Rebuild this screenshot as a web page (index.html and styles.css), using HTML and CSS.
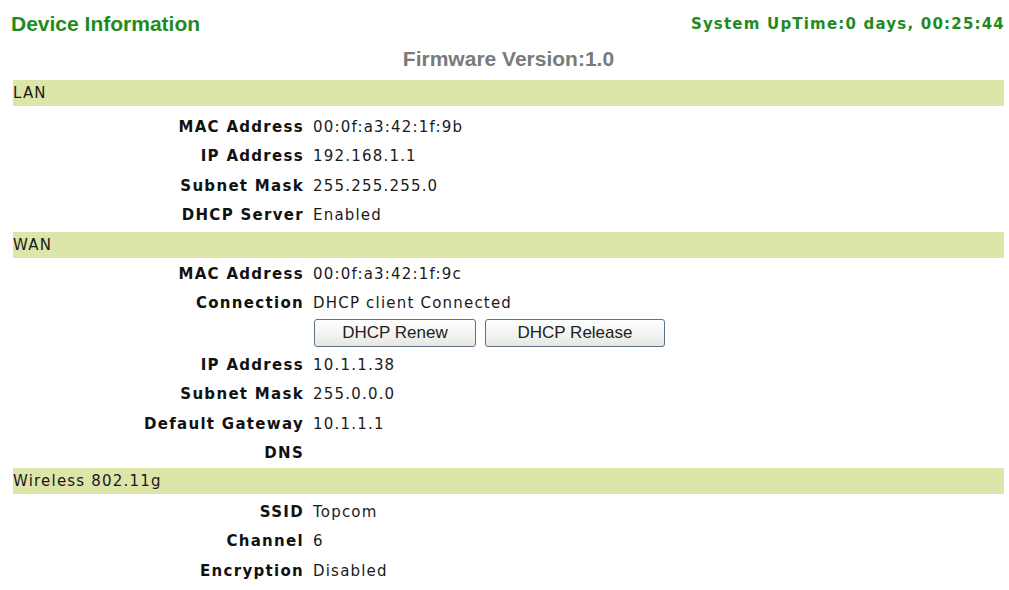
FILE: index.html
```html
<!DOCTYPE html>
<html>
<head>
<meta charset="utf-8">
<title>Device Information</title>
<link rel="stylesheet" href="styles.css">
</head>
<body>
<div class="page">
  <div class="header">
    <div class="title">Device Information</div>
    <div class="uptime">System UpTime:0 days, 00:25:44</div>
  </div>
  <div class="firmware">Firmware Version:1.0</div>

  <div class="bar">LAN</div>
  <div class="rows rows-lan">
    <div class="label">MAC Address</div><div class="value">00:0f:a3:42:1f:9b</div>
    <div class="label">IP Address</div><div class="value">192.168.1.1</div>
    <div class="label">Subnet Mask</div><div class="value">255.255.255.0</div>
    <div class="label">DHCP Server</div><div class="value">Enabled</div>
  </div>

  <div class="bar">WAN</div>
  <div class="rows rows-wan">
    <div class="label">MAC Address</div><div class="value">00:0f:a3:42:1f:9c</div>
    <div class="label">Connection</div><div class="value">DHCP client Connected</div>
    <div class="label btn-label"></div>
    <div class="buttons">
      <button class="btn btn-renew">DHCP Renew</button>
      <button class="btn btn-release">DHCP Release</button>
    </div>
    <div class="label">IP Address</div><div class="value">10.1.1.38</div>
    <div class="label">Subnet Mask</div><div class="value">255.0.0.0</div>
    <div class="label">Default Gateway</div><div class="value">10.1.1.1</div>
    <div class="label">DNS</div><div class="value"></div>
  </div>

  <div class="bar">Wireless 802.11g</div>
  <div class="rows rows-wl">
    <div class="label">SSID</div><div class="value">Topcom</div>
    <div class="label">Channel</div><div class="value">6</div>
    <div class="label">Encryption</div><div class="value">Disabled</div>
  </div>
</div>
</body>
</html>
```

FILE: styles.css
```css
html, body {
  margin: 0;
  padding: 0;
  background: #ffffff;
}

.page {
  margin-left: 13px;
  width: 991px;
  font-family: "DejaVu Sans", Verdana, sans-serif;
  color: #111;
}

.header {
  height: 48px;
  display: flex;
  align-items: center;
  justify-content: space-between;
}

.title {
  margin-left: -2px;
  font-family: "Liberation Sans", Arial, sans-serif;
  font-weight: bold;
  font-size: 21px;
  color: #1f8b1f;
}

.uptime {
  font-weight: bold;
  font-size: 15px;
  letter-spacing: 1.2px;
  margin-right: -1px;
  color: #1f8b1f;
}

.firmware {
  text-align: center;
  font-family: "Liberation Sans", Arial, sans-serif;
  font-weight: bold;
  font-size: 21px;
  line-height: 21px;
  color: #7a7a7a;
  margin-bottom: 11px;
}

.bar {
  height: 26px;
  line-height: 26px;
  background: #dde5a9;
  font-size: 15px;
  letter-spacing: 1.2px;
  color: #1a1a1a;
}

.rows {
  display: grid;
  grid-template-columns: 291px 1fr;
  column-gap: 9px;
  grid-auto-rows: 29.5px;
  align-items: center;
}

.rows-lan { padding: 6px 0 2px; }
.rows-wan { padding: 1px 0 0; }
.rows-wl { padding: 3px 0 0; }

.label {
  text-align: right;
  font-weight: bold;
  font-size: 15px;
  letter-spacing: 1.3px;
  color: #111;
  white-space: nowrap;
}

.value {
  font-size: 15px;
  letter-spacing: 1.2px;
  color: #1a1a1a;
  white-space: nowrap;
}

.buttons {
  display: flex;
  gap: 9px;
  align-self: start;
  margin-top: 1px;
  margin-left: 1px;
}

.rows .btn-label { height: 32px; }

.rows-wan > .buttons,
.rows-wan > .btn-label {
  grid-row: 3;
}

.rows-wan {
  grid-template-rows: 29.5px 29.5px 32px;
}

.btn {
  height: 28px;
  padding: 0;
  font-family: "Liberation Sans", Arial, sans-serif;
  font-size: 17px;
  color: #222;
  background: linear-gradient(#fefefe 0%, #f4f4f2 50%, #e6e6e3 100%);
  border: 1px solid #5f7186;
  border-radius: 3px;
  box-sizing: border-box;
}

.btn-renew { width: 162px; }
.btn-release { width: 180px; }
```
